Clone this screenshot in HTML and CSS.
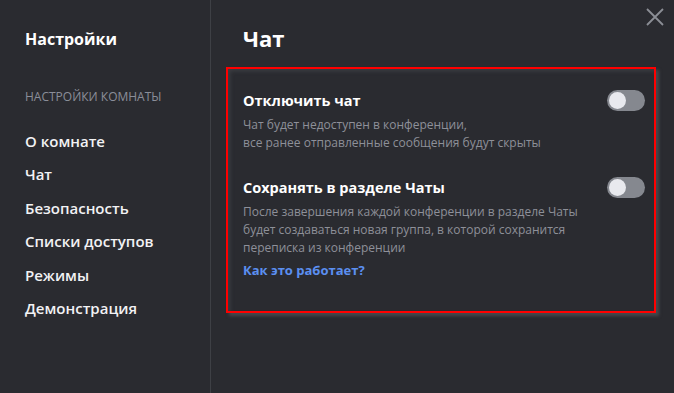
FILE: index.html
```html
<!DOCTYPE html>
<html lang="ru">
<head>
    <meta charset="UTF-8">
    <meta name="viewport" content="width=device-width, initial-scale=1.0">
    <title>Настройки — Чат</title>
    <link rel="stylesheet" href="styles.css">
</head>
<body>
    <div class="layout">
        <aside class="sidebar">
            <h2 class="sidebar-title">Настройки</h2>
            <div class="sidebar-caption">НАСТРОЙКИ КОМНАТЫ</div>
            <ul class="menu">
                <li class="menu-item">О комнате</li>
                <li class="menu-item">Чат</li>
                <li class="menu-item">Безопасность</li>
                <li class="menu-item">Списки доступов</li>
                <li class="menu-item">Режимы</li>
                <li class="menu-item">Демонстрация</li>
            </ul>
        </aside>

        <main class="content">
            <h1 class="page-title">Чат</h1>

            <div class="card">
                <div class="option">
                    <div class="option-text">
                        <div class="option-title">Отключить чат</div>
                        <div class="option-desc">
                            Чат будет недоступен в конференции,<br>
                            все ранее отправленные сообщения будут скрыты
                        </div>
                    </div>
                    <div class="toggle"><span class="knob"></span></div>
                </div>

                <div class="option">
                    <div class="option-text">
                        <div class="option-title">Сохранять в разделе Чаты</div>
                        <div class="option-desc">
                            После завершения каждой конференции в разделе Чаты<br>
                            будет создаваться новая группа, в которой сохранится<br>
                            переписка из конференции
                        </div>
                        <a class="option-link" href="#">Как это работает?</a>
                    </div>
                    <div class="toggle"><span class="knob"></span></div>
                </div>
            </div>
        </main>

        <button class="close" type="button" aria-label="Закрыть">
            <svg width="18" height="18" viewBox="0 0 18 18">
                <path d="M1 1 L17 17 M17 1 L1 17" stroke="#8b8e95" stroke-width="1.8" fill="none"/>
            </svg>
        </button>
    </div>
</body>
</html>
```

FILE: styles.css
```css
body {
    margin: 0;
    background-color: #2a2b30;
    font-family: "Open Sans", "Noto Sans", sans-serif;
    color: #ffffff;
}
.layout {
    position: relative;
    display: flex;
    height: 393px;
    overflow: hidden;
}
.sidebar {
    width: 185px;
    padding: 27px 0 0 25px;
    border-right: 1px solid #3e4045;
    flex-shrink: 0;
}
.sidebar-title {
    margin: 0;
    font-size: 16px;
    line-height: 24px;
    font-weight: 700;
}
.sidebar-caption {
    margin-top: 38px;
    font-size: 12px;
    line-height: 16px;
    color: #8a8e99;
}
.menu {
    list-style: none;
    margin: 19.5px 0 0;
    padding: 0;
}
.menu-item {
    font-size: 15px;
    line-height: 33.6px;
    font-weight: 600;
    color: #f2f2f4;
}
.content {
    flex: 1;
    padding: 22px 18px 0 15px;
}
.page-title {
    margin: 0 0 0 17px;
    font-size: 22px;
    line-height: 32px;
    font-weight: 700;
}
.card {
    box-sizing: border-box;
    margin-top: 13px;
    height: 246px;
    padding: 21px 9px 0 15px;
    border: 2px solid #ff0000;
    box-shadow: 3px 3px 3px #45474c, inset 3px 3px 4px -1px #3d3f44;
}
.option {
    display: flex;
    justify-content: space-between;
    align-items: flex-start;
}
.option + .option {
    margin-top: 25px;
}
.option-title {
    font-size: 14.5px;
    line-height: 22px;
    font-weight: 700;
}
.option-desc {
    margin-top: 4px;
    font-size: 12px;
    line-height: 18px;
    color: #8e9099;
}
.option-link {
    display: block;
    margin-top: 3px;
    font-size: 13px;
    line-height: 20px;
    font-weight: 700;
    color: #5b8ff0;
    text-decoration: none;
}
.toggle {
    position: relative;
    width: 38px;
    height: 21px;
    border-radius: 11px;
    background-color: #85888f;
    flex-shrink: 0;
}
.knob {
    position: absolute;
    left: 2px;
    top: 2px;
    width: 17px;
    height: 17px;
    border-radius: 50%;
    background-color: #e8e9ee;
}
.close {
    position: absolute;
    top: 8px;
    right: 10px;
    padding: 0;
    border: none;
    background: none;
    cursor: pointer;
}
.close svg {
    display: block;
}
```
